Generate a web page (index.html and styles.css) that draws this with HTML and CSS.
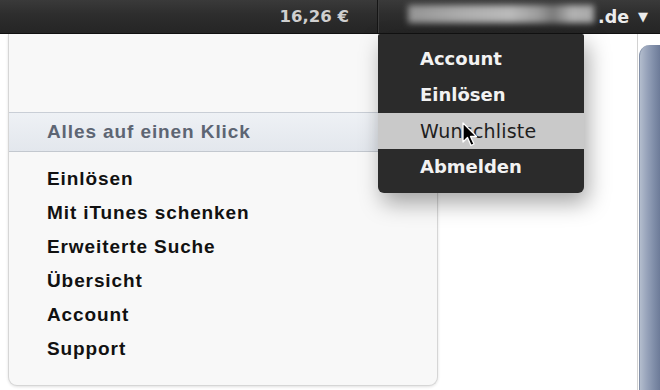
FILE: index.html
```html
<!DOCTYPE html>
<html lang="de">
<head>
    <meta charset="UTF-8">
    <meta name="viewport" content="width=device-width, initial-scale=1.0">
    <title>iTunes Store - Account Menu</title>
    <link rel="stylesheet" href="styles.css">
</head>
<body>
    <div class="topbar">
        <div class="balance">16,26 €</div>
        <div class="account-toggle">
            <span class="email-blur"></span>
            <span class="email-tld">.de</span>
            <span class="caret">▼</span>
        </div>
    </div>

    <div class="main">
        <div class="side">
            <div class="panel">
                <div class="panel-head">Alles auf einen Klick</div>
                <ul class="quick-links">
                    <li>Einlösen</li>
                    <li>Mit iTunes schenken</li>
                    <li>Erweiterte Suche</li>
                    <li>Übersicht</li>
                    <li>Account</li>
                    <li>Support</li>
                </ul>
            </div>
        </div>
        <div class="content"></div>
        <div class="scroll-track">
            <div class="scroll-thumb"></div>
        </div>
    </div>

    <!-- account dropdown, open -->
    <ul class="dropdown">
        <li>Account</li>
        <li>Einlösen</li>
        <li class="hover">Wunschliste</li>
        <li>Abmelden</li>
    </ul>

    <svg class="cursor" width="16" height="26" viewBox="0 0 16 26">
        <path d="M1 1 L1 20 L5.5 15.5 L9 23.5 L12 22 L8.5 14.5 L14.5 14.5 Z" fill="#000" stroke="#fff" stroke-width="1.3" stroke-linejoin="round"/>
    </svg>
</body>
</html>
```

FILE: styles.css
```css
html, body {
    margin: 0;
    padding: 0;
}
body {
    width: 660px;
    height: 390px;
    overflow: hidden;
    position: relative;
    background: #fff;
    font-family: "Liberation Sans", Arial, sans-serif;
}

/* top bar */
.topbar {
    display: flex;
    height: 33px;
    background: linear-gradient(#3a3a3a, #2d2d2d 45%, #252525);
    border-bottom: 1px solid #111;
}
.balance {
    flex: 1;
    text-align: right;
    padding-right: 28px;
    font-family: "DejaVu Sans", sans-serif;
    font-weight: bold;
    font-size: 16.5px;
    line-height: 33px;
    color: #cfcfcf;
    border-right: 1px solid #151515;
}
.account-toggle {
    width: 281px;
    display: flex;
    align-items: center;
    border-left: 1px solid #3e3e3e;
    font-family: "DejaVu Sans", sans-serif;
    font-weight: bold;
    color: #ececec;
}
.email-blur {
    display: block;
    width: 186px;
    height: 18px;
    margin-left: 29px;
    margin-top: -6px;
    background: linear-gradient(90deg, #949494, #adadad 30%, #bababa 55%, #9c9c9c 70%, #7a7a7a 78%, #b2b2b2 88%, #a8a8a8);
    filter: blur(3px);
}
.email-tld {
    margin-left: 4px;
    font-size: 17.5px;
}
.caret {
    margin-left: 9px;
    font-size: 13px;
}

/* main area */
.main {
    display: flex;
    height: 356px;
    overflow: hidden;
}
.side {
    width: 438px;
    padding-left: 8px;
    box-sizing: border-box;
}
.panel {
    height: 352px;
    background: #f8f8f8;
    border: 1px solid #d6d6d6;
    border-top: none;
    border-radius: 0 0 9px 9px;
    box-shadow: 0 1px 3px rgba(0, 0, 0, 0.12);
    padding-top: 78px;
    box-sizing: border-box;
}
.panel-head {
    height: 38px;
    line-height: 38px;
    padding-left: 38px;
    background: linear-gradient(#eef1f5, #e3e7ed);
    border-top: 1px solid #c9ced6;
    border-bottom: 1px solid #c3c8cf;
    font-weight: bold;
    font-size: 19px;
    letter-spacing: 0.9px;
    color: #5d6573;
}
.quick-links {
    list-style: none;
    margin: 0;
    padding: 10px 0 0 38px;
}
.quick-links li {
    height: 34px;
    line-height: 34px;
    font-weight: bold;
    font-size: 19px;
    letter-spacing: 0.9px;
    color: #111;
}
.content {
    flex: 1;
}
.scroll-track {
    width: 23px;
    border-left: 1px solid #d2d2d2;
    padding-top: 11px;
    padding-left: 1px;
    box-sizing: border-box;
    display: flex;
    flex-direction: column;
}
.scroll-thumb {
    flex: 1;
    border-radius: 11px 0 0 0;
    background: linear-gradient(90deg, #b3bdcd, #97a3ba 35%, #7f8da8 70%, #6d7b98);
    border-left: 1px solid #8390a8;
}

/* dropdown menu */
.dropdown {
    position: absolute;
    left: 378px;
    top: 34px;
    width: 206px;
    margin: 0;
    padding: 7px 0 8px;
    list-style: none;
    background: #2b2b2b;
    border-radius: 2px 2px 6px 6px;
    box-shadow: 4px 10px 22px rgba(0, 0, 0, 0.35);
    font-family: "DejaVu Sans", sans-serif;
}
.dropdown li {
    height: 36px;
    line-height: 36px;
    padding-left: 42px;
    font-weight: bold;
    font-size: 18px;
    color: #f2f2f2;
}
.dropdown li.hover {
    background: #c9c9c9;
    color: #1e1e1e;
    font-weight: normal;
    font-size: 19px;
    letter-spacing: 0.2px;
}

.cursor {
    position: absolute;
    left: 462px;
    top: 122px;
}
```
